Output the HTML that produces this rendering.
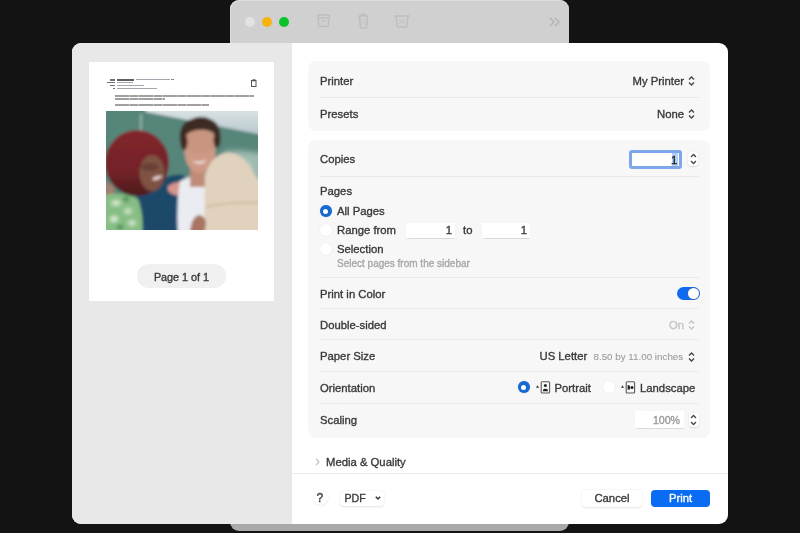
<!DOCTYPE html>
<html><head><meta charset="utf-8">
<style>
*{box-sizing:border-box;margin:0;padding:0}
html,body{width:800px;height:533px;overflow:hidden;background:#131313;font-family:"Liberation Sans",sans-serif;color:#383838}
.a{position:absolute}
#back{position:absolute;left:230px;top:0px;width:339px;height:531px;background:#a9a9a9;border-radius:9px}
#backbar{position:absolute;left:230px;top:0px;width:339px;height:44px;box-shadow:inset 1px 1px 0 rgba(255,255,255,.25);background:#d0d0d0;border-radius:9px 9px 0 0}
.tl{position:absolute;width:10px;height:10px;border-radius:50%;top:17px}
#dlg{position:absolute;left:72px;top:43px;width:656px;height:481px;background:#fff;border-radius:9px;overflow:hidden}
#side{position:absolute;left:0;top:0;width:220px;height:481px;background:#e8e8e8}
#page{position:absolute;left:17px;top:19px;width:185px;height:240px;background:#fff}
.grp{position:absolute;left:308px;width:402px;background:#f7f7f7;border-radius:8px}
.sep{position:absolute;left:320px;width:379px;height:1px;background:#e8e8e8}
.t{position:absolute;font-size:11.3px;line-height:14px;white-space:nowrap;color:#3a3a3a;-webkit-text-stroke:0.35px currentColor}
.r{text-align:right}
.radio{position:absolute;width:12px;height:12px;border-radius:50%;background:#fff;box-shadow:0 0 0 0.5px #eaeaea, 0 0.5px 1px rgba(0,0,0,.06)}
.radio.on{background:#1768d0;box-shadow:0 0 1px rgba(40,120,230,.5)}
.radio.on:after{content:"";position:absolute;left:3.5px;top:3.5px;width:5px;height:5px;border-radius:50%;background:#fff}
.field{position:absolute;background:#fff;box-shadow:0 0.5px 1px rgba(0,0,0,.12)}
svg{position:absolute;overflow:visible}
</style></head><body>
<div id="root" style="position:absolute;left:0;top:0;width:800px;height:533px;filter:blur(0.45px)">
<div id="back"></div>
<div id="backbar">
  <div class="tl" style="left:15px;background:#e2e2e2"></div>
  <div class="tl" style="left:32px;background:#f6b30e"></div>
  <div class="tl" style="left:49px;background:#0bc22a"></div>
</div>
<div id="dlg">
  <div id="side">
    
  </div>
</div>

<div class="a" style="left:89px;top:62px;width:185px;height:239px;background:#fff"></div>
<div class="a" style="left:0;top:0;width:800px;height:120px;filter:blur(0.35px)">
<!-- header tiny text -->
<div class="a" style="left:109.5px;top:79px;width:5.5px;height:1.5px;background:#707070"></div>
<div class="a" style="left:117px;top:79px;width:17px;height:1.6px;background:#606060"></div>
<div class="a" style="left:136px;top:79.2px;width:34px;height:1.3px;background:#a6a6b0"></div>
<div class="a" style="left:171px;top:79.2px;width:3px;height:1.3px;background:#888"></div>
<div class="a" style="left:106.5px;top:81.8px;width:8.5px;height:1.5px;background:#707070"></div>
<div class="a" style="left:117px;top:81.9px;width:16px;height:1.3px;background:#a6a6b0"></div>
<div class="a" style="left:110px;top:84.5px;width:5px;height:1.5px;background:#707070"></div>
<div class="a" style="left:117px;top:84.6px;width:27px;height:1.3px;background:#a6a6b0"></div>
<div class="a" style="left:112.5px;top:87.5px;width:2.5px;height:1.5px;background:#707070"></div>
<div class="a" style="left:117px;top:87.6px;width:40px;height:1.3px;background:#a6a6b0"></div>
<svg style="left:251px;top:78.5px" width="6" height="8"><rect x="0.5" y="1.5" width="4.5" height="6" fill="none" stroke="#555" stroke-width="1"/><rect x="1.5" y="0.3" width="3" height="2" fill="#555"/></svg>
<div class="a" style="left:115px;top:95.2px;width:139px;height:1.7px;background:repeating-linear-gradient(90deg,#a0a0a0 0 14px,#c8c8c8 14px 15px,#a0a0a0 15px 23px,#cacaca 23px 24px)"></div>
<div class="a" style="left:115px;top:98.3px;width:50px;height:1.7px;background:repeating-linear-gradient(90deg,#a0a0a0 0 14px,#c8c8c8 14px 15px,#a0a0a0 15px 23px,#cacaca 23px 24px)"></div>
<div class="a" style="left:115px;top:104.3px;width:94px;height:1.7px;background:repeating-linear-gradient(90deg,#a0a0a0 0 14px,#c8c8c8 14px 15px,#a0a0a0 15px 23px,#cacaca 23px 24px)"></div>
</div>
<!-- photo -->
<svg style="left:106px;top:111px" width="152" height="119" viewBox="0 0 152 119">
<defs><filter id="bl" x="-10%" y="-10%" width="120%" height="120%"><feGaussianBlur stdDeviation="1.4"/></filter>
<filter id="bl2" x="-20%" y="-20%" width="140%" height="140%"><feGaussianBlur stdDeviation="2.5"/></filter>
<linearGradient id="hairg" x1="0" y1="0" x2="0" y2="1"><stop offset="0" stop-color="#82262c"/><stop offset="0.65" stop-color="#722228"/><stop offset="1" stop-color="#4a181b"/></linearGradient>
<linearGradient id="skyg" x1="0" y1="0" x2="0" y2="1"><stop offset="0" stop-color="#dfe6e7"/><stop offset="1" stop-color="#b6c6cc"/></linearGradient>
<clipPath id="cp"><rect x="0" y="0" width="152" height="119"/></clipPath></defs>
<g clip-path="url(#cp)">
<rect x="0" y="0" width="152" height="119" fill="#57857a"/>
<g filter="url(#bl)">
<rect x="-5" y="-5" width="165" height="130" fill="#57857a"/>
<path d="M38 -5 L160 -5 L160 24.5 L76 8 L40 1 Z" fill="url(#skyg)"/>
<rect x="34" y="3" width="2" height="18" fill="#95b2a8"/>
<g filter="url(#bl2)">
<path d="M118 40 Q140 38 160 44 L160 95 Q140 90 120 70 Z" fill="#9fbab0"/>
<ellipse cx="138" cy="60" rx="8" ry="10" fill="#c6d6cc"/>
<ellipse cx="148" cy="78" rx="6" ry="8" fill="#d0ddd4"/>
</g>
<!-- left woman -->
<path d="M-3 70 Q4 72 8 76 L9 86 L-3 88 Z" fill="#a08070"/>
<path d="M24 90 Q40 80 58 67 Q68 62 78 64 L80 125 L22 125 Z" fill="#1b496a"/>
<ellipse cx="31" cy="52" rx="32" ry="33" fill="url(#hairg)"/>
<ellipse cx="46" cy="62" rx="12.5" ry="18" fill="#7e5243"/>
<ellipse cx="44" cy="56" rx="9" ry="4" fill="#6a4034"/>
<path d="M46 69 Q52 70 57 65 Q54 64 48 66 Z" fill="#ead2d0"/>
<path d="M-3 84 Q16 80 32 88 Q38 104 36 125 L-3 125 Z" fill="#86bd84"/>
<g filter="url(#bl)">
<ellipse cx="10" cy="92" rx="5" ry="3" fill="#d8e8d2"/><ellipse cx="22" cy="100" rx="4" ry="3" fill="#cfe3c6"/><ellipse cx="8" cy="108" rx="4" ry="3" fill="#e2eedc"/><ellipse cx="26" cy="112" rx="4" ry="3" fill="#d2e4cc"/><ellipse cx="20" cy="88" rx="3" ry="2" fill="#3f7f45"/><ellipse cx="14" cy="116" rx="3" ry="2" fill="#3f7f45"/>
</g>
<path d="M62 75 Q70 70 79 71 L78 84 Q68 86 62 80 Z" fill="#d6958d"/>
<!-- right woman -->
<path d="M74 70 Q86 64 99 62 L99 108 L92 125 L72 125 Q70 95 74 70 Z" fill="#eaecf2"/>
<rect x="84" y="54" width="15" height="22" fill="#c08a78"/>
<ellipse cx="94" cy="41" rx="15.5" ry="21" fill="#cd9a86"/>
<ellipse cx="94" cy="30" rx="17" ry="12" fill="#c99580"/>
<path d="M86 50 Q94 56 101 49 Q94 52 86 50 Z" fill="#f3ebe8"/>
<path d="M74 30 Q72 12 86 8 Q96 3 106 9 Q116 14 114 30 Q110 22 104 20 Q94 17 84 21 Q78 24 76 36 Z" fill="#3c2a22"/>
<ellipse cx="78" cy="31" rx="3.5" ry="8" fill="#3c2a22"/>
<ellipse cx="111" cy="29" rx="3.5" ry="8" fill="#3c2a22"/>
<path d="M98 125 L99 64 Q106 44 119 42 Q136 40 146 60 L160 80 L160 125 Z" fill="#e0d2bd"/>
<path d="M100 96 Q125 90 160 92" fill="none" stroke="#c6b59c" stroke-width="1.5"/>
<path d="M84 125 Q84 108 92 104 Q99 104 100 112 L98 125 Z" fill="#a87464"/>
</g></g>
</svg>
<!-- page pill -->
<div class="a" style="left:137px;top:264px;width:89px;height:24px;border-radius:12px;background:#f0f0f0"></div>
<div class="t" style="left:137px;width:89px;text-align:center;top:270px;font-size:10.8px">Page 1 of 1</div>
<svg style="left:316px;top:14px" width="16" height="14"><rect x="1.5" y="1" width="12" height="3" rx="0.8" fill="none" stroke="#bebebe" stroke-width="1.4"/><path d="M2.5 4v7.5q0 1 1 1h8q1 0 1-1V4" fill="none" stroke="#bebebe" stroke-width="1.4"/><path d="M5.5 7h4" stroke="#bebebe" stroke-width="1.4"/></svg>
<svg style="left:357px;top:13px" width="13" height="16"><path d="M1 3h11M4.5 3V1.5h4V3" fill="none" stroke="#bebebe" stroke-width="1.3"/><path d="M2.5 3.5l0.8 10.5q0.1 1 1 1h4.4q1 0 1-1l0.8-10.5" fill="none" stroke="#bebebe" stroke-width="1.4"/><path d="M5 6v6M8 6v6" stroke="#c6c6c6" stroke-width="1"/></svg>
<svg style="left:393px;top:14px" width="18" height="14"><path d="M1 2h16M3 2l1.2 10q0.1 1 1 1h7.6q1 0 1-1L15 2" fill="none" stroke="#bebebe" stroke-width="1.4"/><path d="M6 5l6 5M12 5l-6 5" stroke="#c4c4c4" stroke-width="1.2"/></svg>
<svg style="left:549px;top:17px" width="12" height="10"><path d="M1 1l4 4-4 4M6 1l4 4-4 4" fill="none" stroke="#b2b2b2" stroke-width="1.3"/></svg>

<!-- right panel groups -->
<div class="grp" style="top:61px;height:70px"></div>
<div class="grp" style="top:140px;height:298px"></div>
<div class="sep" style="top:97px"></div>
<div class="sep" style="top:176px"></div>
<div class="sep" style="top:277px"></div>
<div class="sep" style="top:308px"></div>
<div class="sep" style="top:339px"></div>
<div class="sep" style="top:371px"></div>
<div class="sep" style="top:403px"></div>
<div class="a" style="left:292px;top:473px;width:436px;height:1px;background:#ebebeb"></div>

<!-- labels -->
<div class="t" style="left:320px;top:73.5px">Printer</div>
<div class="t" style="left:320px;top:106.5px">Presets</div>
<div class="t" style="left:320px;top:152px">Copies</div>
<div class="t" style="left:320px;top:184px">Pages</div>
<div class="t" style="left:337px;top:204px">All Pages</div>
<div class="t" style="left:337px;top:222.5px">Range from</div>
<div class="t" style="left:337px;top:241.5px">Selection</div>
<div class="t" style="left:337px;top:257px;font-size:10px;color:#a8a8a8">Select pages from the sidebar</div>
<div class="t" style="left:320px;top:286.8px">Print in Color</div>
<div class="t" style="left:320px;top:317.8px">Double-sided</div>
<div class="t" style="left:320px;top:349px">Paper Size</div>
<div class="t" style="left:320px;top:380.5px">Orientation</div>
<div class="t" style="left:320px;top:412.5px">Scaling</div>
<div class="t" style="left:326px;top:454.5px">Media &amp; Quality</div>

<!-- values -->
<div class="t r" style="right:116px;top:73.5px">My Printer</div>
<div class="t r" style="right:116px;top:106.5px">None</div>
<svg style="left:688px;top:76px" width="7" height="10"><path d="M1 3.5L3.5 1L6 3.5M1 6.5L3.5 9L6 6.5" fill="none" stroke="#444" stroke-width="1.3"/></svg>
<svg style="left:688px;top:109px" width="7" height="10"><path d="M1 3.5L3.5 1L6 3.5M1 6.5L3.5 9L6 6.5" fill="none" stroke="#444" stroke-width="1.3"/></svg>

<!-- copies field -->
<div class="a" style="left:629px;top:150px;width:53px;height:19px;border-radius:3px;background:#fff;border:3px solid #7ea6ea"></div>
<div class="a" style="left:672px;top:153px;width:6px;height:13px;background:#b4cff5"></div>
<div class="t" style="left:671px;top:152.5px;color:#222">1</div>
<div class="a" style="left:688px;top:152px;width:10px;height:14px;border-radius:3px;background:#fff;box-shadow:0 0.5px 1.5px rgba(0,0,0,.18)"></div>
<svg style="left:689.5px;top:153px" width="7" height="12"><path d="M1 4L3.5 1.5L6 4M1 8L3.5 10.5L6 8" fill="none" stroke="#444" stroke-width="1.3"/></svg>

<!-- radios -->
<div class="radio on" style="left:319.5px;top:205px"></div>
<div class="radio" style="left:319.5px;top:224px"></div>
<div class="radio" style="left:319.5px;top:242.5px"></div>
<div class="field" style="left:406px;top:223px;width:49px;height:15px"></div>
<div class="t r" style="left:406px;width:46px;top:222.5px">1</div>
<div class="t" style="left:463px;top:222.5px">to</div>
<div class="field" style="left:482px;top:223px;width:48px;height:15px"></div>
<div class="t r" style="left:482px;width:45px;top:222.5px">1</div>

<!-- toggle -->
<div class="a" style="left:677px;top:287px;width:23px;height:13px;border-radius:7px;background:#0f6af0"></div>
<div class="a" style="left:688px;top:288px;width:11px;height:11px;border-radius:50%;background:#fff;box-shadow:0 0 0 0.8px rgba(90,90,110,.45)"></div>

<!-- double sided -->
<div class="t r" style="right:116px;top:317.8px;color:#c4c4c4">On</div>
<svg style="left:688px;top:319.5px" width="7" height="10"><path d="M1 3.5L3.5 1L6 3.5M1 6.5L3.5 9L6 6.5" fill="none" stroke="#c4c4c4" stroke-width="1.3"/></svg>

<!-- paper size -->
<div class="t" style="left:539.5px;top:349px">US Letter</div>
<div class="t" style="left:593.5px;top:350px;font-size:9.8px;color:#9c9c9c;-webkit-text-stroke:0.1px currentColor">8.50 by 11.00 inches</div>
<svg style="left:688px;top:351.5px" width="7" height="10"><path d="M1 3.5L3.5 1L6 3.5M1 6.5L3.5 9L6 6.5" fill="none" stroke="#444" stroke-width="1.3"/></svg>

<!-- orientation -->
<div class="radio on" style="left:517.5px;top:381px"></div>
<div class="radio" style="left:602.5px;top:381px"></div>
<svg style="left:535px;top:381px" width="16" height="13">
  <path d="M1 6.8L2.5 4.2L4 6.8Z" fill="#333"/>
  <rect x="6.2" y="0.8" width="8.4" height="11.2" rx="1" fill="none" stroke="#5a5a5a" stroke-width="1.1"/>
  <circle cx="10.4" cy="4.6" r="1.5" fill="#222"/>
  <path d="M7.8 10.2L8.3 8.2Q10.4 7.1 12.5 8.2L13 10.2Z" fill="#222"/>
</svg>
<div class="t" style="left:554.5px;top:380.5px">Portrait</div>
<svg style="left:620px;top:381px" width="16" height="13">
  <path d="M1 6.8L2.5 4.2L4 6.8Z" fill="#333"/>
  <rect x="6.2" y="0.8" width="8.4" height="11.2" rx="1" fill="none" stroke="#5a5a5a" stroke-width="1.1"/>
  <circle cx="12" cy="6.4" r="1.5" fill="#222"/>
  <path d="M7.6 4L9.6 4.4Q10.5 6.4 9.6 8.4L7.6 8.8Z" fill="#222"/>
</svg>
<div class="t" style="left:640px;top:380.5px">Landscape</div>

<!-- scaling -->
<div class="field" style="left:635px;top:411px;width:49px;height:17px"></div>
<div class="t r" style="left:635px;width:45px;top:412.5px;color:#9a9a9a;font-size:10.6px">100%</div>
<div class="a" style="left:688.5px;top:413px;width:10px;height:14px;border-radius:3px;background:#fff;box-shadow:0 0.5px 1.5px rgba(0,0,0,.18)"></div>
<svg style="left:690px;top:414px" width="7" height="12"><path d="M1 4L3.5 1.5L6 4M1 8L3.5 10.5L6 8" fill="none" stroke="#444" stroke-width="1.3"/></svg>

<!-- media & quality -->
<svg style="left:315px;top:458px" width="6" height="8"><path d="M1 0.8L4 4L1 7.2" fill="none" stroke="#bbb" stroke-width="1.1"/></svg>

<!-- bottom -->
<div class="a" style="left:312.5px;top:490px;width:15px;height:15px;border-radius:50%;background:#fff;box-shadow:0 0.5px 2px rgba(0,0,0,.13)"></div>
<div class="t" style="left:316.5px;top:490.5px;font-size:12px">?</div>
<div class="a" style="left:340px;top:491px;width:44px;height:15px;border-radius:4px;background:#fff;box-shadow:0 0.5px 2px rgba(0,0,0,.12)"></div>
<div class="t" style="left:344.5px;top:490.5px;font-size:10.6px">PDF</div>
<svg style="left:374.5px;top:496px" width="6" height="4"><path d="M0.8 0.8L3 3L5.2 0.8" fill="none" stroke="#333" stroke-width="1.5"/></svg>
<div class="a" style="left:582px;top:489.5px;width:60px;height:17px;border-radius:4px;background:#fff;box-shadow:0 0.5px 2px rgba(0,0,0,.12)"></div>
<div class="t" style="left:582px;width:60px;text-align:center;top:491px">Cancel</div>
<div class="a" style="left:651px;top:490px;width:59px;height:16.5px;border-radius:4px;background:#0a6cf2"></div>
<div class="t" style="left:651px;width:59px;text-align:center;top:491px;color:#fff">Print</div>
</div>
</body></html>
